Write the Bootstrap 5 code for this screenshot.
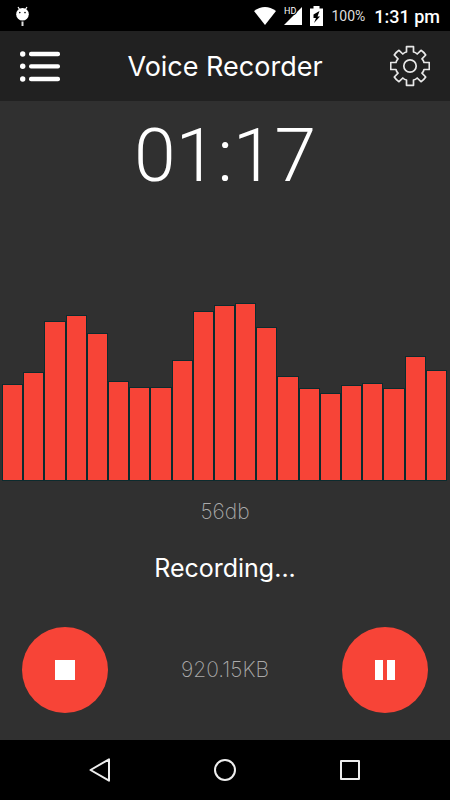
<!DOCTYPE html>
<html lang="en">
<head>
<meta charset="utf-8">
<meta name="viewport" content="width=device-width, initial-scale=1">
<title>Voice Recorder</title>
<link href="https://cdn.jsdelivr.net/npm/bootstrap@5.3.0/dist/css/bootstrap.min.css" rel="stylesheet">
<style>
  body { background: #303030; color: #fff; font-family: Inter, "Liberation Sans", sans-serif; }
  svg { display: block; }
  .status-bar { height: 31px; background: #000; font-family: Roboto, sans-serif; padding: 0 10px 0 12px; }
  .battery-text { font-size: 14px; color: #ddd; margin: 2px 9px 0 8px; }
  .clock { font-size: 18px; font-weight: 500; margin-top: 2px; }
  .app-header { height: 70px; background: #212121; padding: 0 20px; }
  .app-title { font-size: 27px; line-height: 36px; font-weight: 400; padding-top: 2px; }
  .timer { font-family: Roboto, sans-serif; font-weight: 300; font-size: 75px; line-height: 108px; }
  .levels { gap: 2px; height: 180px; padding: 0 4px 0 3px; }
  .level { background: #f74437; box-shadow: 0 0 0 1px #0c2b2e; }
  .reading { font-size: 21px; line-height: 32px; font-weight: 200; color: #aaa; }
  .state { font-size: 25px; line-height: 40px; margin: 20px 0 39px; }
  .controls { padding: 0 22px 27px; }
  .round-btn { width: 86px; height: 86px; background: #f74437; }
  .round-btn:hover { background: #e03a2e; }
  .system-nav { height: 60px; background: #000; padding: 0 37px; }
</style>
</head>
<body class="d-flex flex-column min-vh-100">
  <div class="status-bar d-flex align-items-center">
    <svg width="20" height="24" viewBox="0 0 20 24" aria-hidden="true">
      <path d="M6 3l2 3M15 3l-2 3" stroke="#fff" stroke-width="1.2"/>
      <circle cx="10.5" cy="10.3" r="6.3" fill="#fff"/>
      <circle cx="7.8" cy="8.6" r=".8"/><circle cx="13" cy="8.6" r=".8"/>
      <path d="M10.5 17.500v4.500" stroke="#ddd" stroke-width="2"/>
    </svg>
    <svg class="ms-auto" width="22" height="18" viewBox="0 0 22 18" aria-label="Wi-Fi" role="img">
      <path d="M0 4Q11-4 22 4L11 18z" fill="#fff"/>
    </svg>
    <svg class="ms-2" width="18" height="20" viewBox="0 0 18 20" aria-label="HD signal" role="img">
      <path d="M18 1v18H0z" fill="#fff"/>
      <text x="0" y="8" font-size="9" fill="#fff" stroke="#000" stroke-width="2" paint-order="stroke">HD</text>
    </svg>
    <svg class="ms-2" width="13" height="20" viewBox="0 0 13 20" aria-label="Battery" role="img">
      <path d="M3.500 0h6v2.500H13V20H0V2.500h3.500z" fill="#fff"/>
      <path d="M9.500 5L3.500 8.500v3.500h2.500L4 17l6-6.500H7.500z" fill="#000"/>
    </svg>
    <span class="battery-text">100%</span>
    <span class="clock">1:31 pm</span>
  </div>

  <header class="app-header d-flex align-items-center justify-content-between">
    <button type="button" class="btn p-0 border-0" aria-label="Recordings">
      <svg width="40" height="40" viewBox="0 0 40 40" fill="#fff">
        <circle cx="2.700" cy="8" r="2.700"/><circle cx="2.700" cy="20.300" r="2.700"/><circle cx="2.700" cy="33" r="2.700"/>
        <rect x="9" y="5.800" width="31" height="4.400" rx="2"/><rect x="9" y="18.200" width="31" height="4.400" rx="2"/><rect x="9" y="30.800" width="31" height="4.400" rx="2"/>
      </svg>
    </button>
    <h1 class="app-title m-0">Voice Recorder</h1>
    <button type="button" class="btn p-0 border-0" aria-label="Settings">
      <svg width="40" height="42" viewBox="-20 -21 40 42" fill="none" stroke="#e8e8e8" stroke-width="1.700" stroke-linejoin="round">
        <path d="M-3.500-19.300H3.500V-14Q5.500-13.600 7.200-12L11-15.700Q13.800-14 15.700-11L12-7.200Q13.600-5.500 14-3.500H19.300V3.500H14Q13.600 5.500 12 7.200L15.700 11Q13.800 14 11 15.700L7.200 12Q5.500 13.600 3.500 14V19.300H-3.500V14Q-5.500 13.600-7.200 12L-11 15.700Q-13.800 14-15.700 11L-12 7.200Q-13.600 5.500-14 3.500H-19.300V-3.500H-14Q-13.600-5.500-12-7.200L-15.700-11Q-13.800-14-11-15.700L-7.200-12Q-5.500-13.600-3.500-14Z"/>
        <circle r="6.200"/>
      </svg>
    </button>
  </header>

  <main class="flex-grow-1 d-flex flex-column text-center">
    <div class="timer" role="timer">01:17</div>
    <div class="levels d-flex align-items-end mt-auto" role="img" aria-label="Sound level history">
      <div class="level flex-fill" style="height:95px"></div>
      <div class="level flex-fill" style="height:107px"></div>
      <div class="level flex-fill" style="height:158px"></div>
      <div class="level flex-fill" style="height:164px"></div>
      <div class="level flex-fill" style="height:146px"></div>
      <div class="level flex-fill" style="height:98px"></div>
      <div class="level flex-fill" style="height:92px"></div>
      <div class="level flex-fill" style="height:92px"></div>
      <div class="level flex-fill" style="height:119px"></div>
      <div class="level flex-fill" style="height:168px"></div>
      <div class="level flex-fill" style="height:174px"></div>
      <div class="level flex-fill" style="height:176px"></div>
      <div class="level flex-fill" style="height:152px"></div>
      <div class="level flex-fill" style="height:103px"></div>
      <div class="level flex-fill" style="height:91px"></div>
      <div class="level flex-fill" style="height:86px"></div>
      <div class="level flex-fill" style="height:94px"></div>
      <div class="level flex-fill" style="height:96px"></div>
      <div class="level flex-fill" style="height:91px"></div>
      <div class="level flex-fill" style="height:123px"></div>
      <div class="level flex-fill" style="height:109px"></div>
    </div>
    <div class="reading mt-3">56db</div>
    <div class="state">Recording...</div>
    <div class="controls d-flex align-items-center justify-content-between">
      <button type="button" class="btn round-btn rounded-circle border-0 p-0 d-flex align-items-center justify-content-center" aria-label="Stop">
        <svg width="20" height="20" viewBox="0 0 20 20"><path d="M0 0h20v20H0z" fill="#fff"/></svg>
      </button>
      <span class="reading">920.15KB</span>
      <button type="button" class="btn round-btn rounded-circle border-0 p-0 d-flex align-items-center justify-content-center" aria-label="Pause">
        <svg width="20" height="20" viewBox="0 0 20 20"><path d="M0 0h8v20H0zM12 0h8v20h-8z" fill="#fff"/></svg>
      </button>
    </div>
  </main>

  <nav class="system-nav d-flex align-items-center justify-content-around" aria-label="System">
    <button type="button" class="btn p-0 border-0" aria-label="Back">
      <svg width="24" height="26" viewBox="0 0 24 26" fill="none" stroke="#eee" stroke-width="2" stroke-linejoin="round"><path d="M21 2.300v21.400L2.500 13z"/></svg>
    </button>
    <button type="button" class="btn p-0 border-0" aria-label="Home">
      <svg width="24" height="24" viewBox="0 0 24 24" fill="none" stroke="#eee" stroke-width="2"><circle cx="12" cy="12" r="10"/></svg>
    </button>
    <button type="button" class="btn p-0 border-0" aria-label="Recent apps">
      <svg width="24" height="24" viewBox="0 0 24 24" fill="none" stroke="#eee" stroke-width="2" stroke-linejoin="round"><path d="M3 3h18v18H3z"/></svg>
    </button>
  </nav>
<script src="https://cdn.jsdelivr.net/npm/bootstrap@5.3.0/dist/js/bootstrap.bundle.min.js"></script>
</body>
</html>
